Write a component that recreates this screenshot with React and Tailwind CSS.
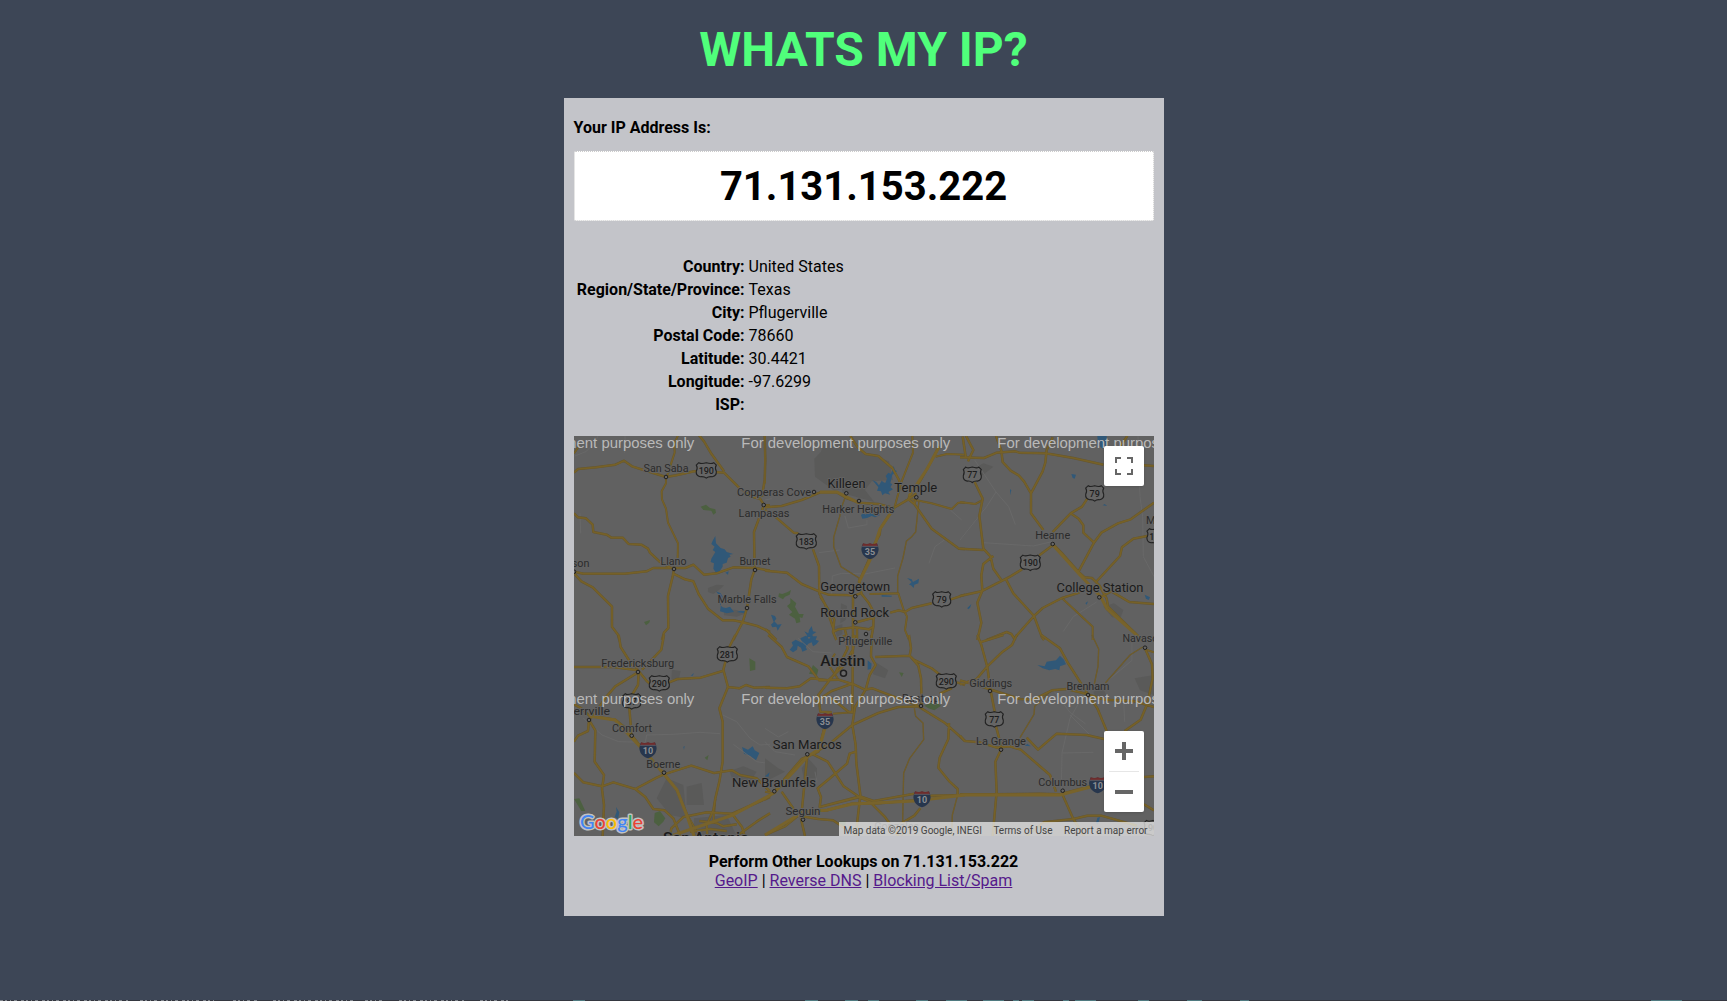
import React from "react";

const details = [
  ["Country:", "United States"],
  ["Region/State/Province:", "Texas"],
  ["City:", "Pflugerville"],
  ["Postal Code:", "78660"],
  ["Latitude:", "30.4421"],
  ["Longitude:", "-97.6299"],
  ["ISP:", ""],
];

// Six map tiles; coordinates inside each tile are in thirds of a pixel.
const tiles = [
  {
    at: "translate(-4 -6) scale(.33333)",
    water: [
      "M436 318L428 332L424 342L434 350L428 360L436 366L424 386L422 396L432 400L430 416L438 428L446 428L458 410L458 402L470 398L474 384L482 380L478 374L490 372L470 366L464 358L452 354L438 340Z",
      "M438 484L452 490L458 500L454 510L450 524L458 532L468 534L480 530L492 546L470 550L450 544L454 516L446 494Z",
      "M500 546L512 542L526 544L524 550ZM466 428L476 424L474 434Z",
    ],
    green: ["M392 230L408 224L420 234L436 238L438 248L430 254L424 242L400 240Z", "M222 576L240 570L238 578L228 586Z"],
    urban: ["M414 474L440 464L462 466L450 478L430 492L414 486ZM462 538L500 540L528 550L500 560L462 556Z"],
    major: ["M12 128L24 117L78 112L136 104L162 92L186 109L240 126L288 141L318 136L372 124L408 124L462 128L504 170L545 200L570 206L582 225L600 226",
      "M382 10L402 34L422 68L462 124", "M584 18L586 90L584 150L576 200",
      "M12 425L40 431L164 431L230 424L250 414L312 414L346 414L370 404L402 434L440 430L490 412L555 414L600 422",
      "M12 250L24 262L48 265L68 284L70 306L110 314L124 323L158 323L176 342L214 344L234 356L240 368L270 396L300 412",
      "M582 225L552 306L554 420L544 448L531 534L518 576L490 630",
      "M312 432L345 448L370 454L386 492L414 536L458 571L490 571L516 576L562 588L600 606",
      "M12 430L34 454L68 472L126 530L126 590L144 614L148 630",
      "M312 417L308 440L294 498L295 594L282 608L276 630"],
    medium: ["M326 12L313 40L314 68L303 102L300 120L288 141L288 160L275 184L276 208L288 236L294 278L324 340L323 384", "M12 70L26 50"],
    minor: ["M14 78L48 65L76 36L84 18M165 18L166 50L164 68M30 250L32 310"],
  },
  {
    at: "translate(191 -6) scale(.33333)",
    water: ["M322 150L334 156L342 166L350 152L358 158L366 156L382 162L376 172L384 178L370 186L376 194L360 190L352 196L348 184L336 182L340 172Z",
      "M362 156L366 146L362 138L370 128L378 132L386 108L390 120L396 124L382 134L376 160Z",
      "M288 256L294 248L302 254L310 246L322 252L340 248L344 256L330 262L320 258L306 264L292 266Z",
      "M426 444L440 448L444 456L462 446L460 460L448 464L446 474L438 466L432 464L440 456Z",
      "M18 554L30 558L34 566L28 574L38 584L50 582L38 602L34 590L22 592L18 584L26 576ZM118 604L130 610L132 600L140 588L144 604L154 606L142 614L146 628L132 620L118 630L126 616ZM350 495L380 497L380 500L350 500Z"],
    green: ["M76 504L94 520L90 530L102 552L116 552L112 564L104 562L106 576L94 580L90 566L72 554L82 546L74 538L66 528L76 520ZM42 490L52 492L68 486L78 480L74 494L60 500L54 508L40 500Z"],
    urban: ["M168 65L176 36L230 30L300 70L372 94L384 150L320 154L300 180L328 216L234 190L230 178L208 182L150 140L148 86Z",
      "M228 520L246 528L242 570L226 580Z", "M208 590L232 582L232 612L216 620Z"],
    major: ["M0 232L50 228L110 210L166 187L216 187L244 204L282 218L340 222L386 234L430 208L454 190",
      "M522 50L498 96L466 152L434 196L430 208L448 222L454 202",
      "M386 234L346 296L344 314L328 342L314 384L282 456L290 492L312 520L326 546L325 590L318 630",
      "M256 18L278 52L302 72L340 78L382 114L402 150L406 170",
      "M448 222L500 296L582 356L600 357", "M0 422L66 428L110 462L162 484L190 494L271 496L286 490",
      "M0 240L26 256L86 308L100 310", "M144 358L162 408L163 490L180 522L208 604L220 598L270 592L312 598L325 590",
      "M264 500L264 630", "M274 577L330 562", "M376 548L402 541L420 546L440 534L500 520", "M558 508L600 494",
      "M2 598L34 630", "M166 500L208 568L204 606L214 630", "M240 600L248 630M276 590L276 630"],
    medium: ["M442 18L444 68L410 154L388 234", "M0 18L0 160", "M512 80L546 72L600 74", "M440 208L500 220L560 237L580 218L600 218",
      "M314 492L400 490L416 540L426 560L420 600L432 630"],
    thin: ["M242 198L228 236L224 260L206 322L206 350L228 410L282 444L290 470", "M462 210L452 306L440 320L424 334L414 384L398 438L398 490"],
    minor: ["M240 258L250 294L306 284L306 270M162 368L224 360M200 492L202 438L230 430L300 432L390 414M0 210L20 206M492 400L510 350L538 330M556 240L590 270"],
  },
  {
    at: "translate(386 -6) scale(.33333)",
    water: ["M412 18L440 18L440 46L428 56L414 44Z", "M334 132L348 134L344 146L338 144ZM428 226L434 222L442 228ZM150 178L154 180L151 196Z",
      "M554 494L570 502L566 510L558 506ZM22 534L34 522L30 534L24 538ZM376 520L384 514L380 524Z"],
    urban: ["M430 530L462 520L490 540L482 562L456 562Z", "M18 130L70 100L100 110L62 140Z"],
    green: [],
    major: ["M0 82L72 84L110 68L166 64L178 68L258 70L340 84L430 104M552 106L582 108", "M18 18L40 60L24 94",
      "M108 18L124 62L128 96L152 122L176 136L192 154L213 190L213 250L250 300",
      "M278 22L260 60L256 98L248 124L213 190", "M278 306L332 250L366 230L382 206",
      "M332 250L356 266L370 286L370 308L402 338", "M582 218L512 268L474 280L424 308L402 338L356 424",
      "M562 318L520 326L486 352L480 378L408 456",
      "M278 342L308 372L354 424L374 442L396 444L418 466L440 506L444 530L530 614L546 630",
      "M278 346L238 376M186 418L150 440L64 484L0 498", "M100 378L70 402L64 436L67 482L52 518L64 578L52 630",
      "M44 156L68 206L58 258L70 356L92 380L100 416L124 450", "M0 356L70 360",
      "M138 448L160 490L222 558L246 622L252 630M358 488L306 504L248 534L222 558L190 594L160 628M424 500L454 484L508 516L582 522",
      "M80 630L140 606L154 612L166 630", "M8 20L18 86M502 18L480 50"],
    medium: ["M308 506L398 590L398 630", "M0 216L46 222L68 210"],
    minor: ["M44 90L108 186L146 230L166 284M108 186L80 230L0 330M70 338L220 348L280 334M534 18L540 200L548 260L550 380L582 440M410 516L340 560L310 604"],
  },
  {
    at: "translate(-4 199) scale(.33333)",
    water: ["M516 336L534 344L548 334L554 346L568 354L558 376L540 362L522 356Z", "M138 516L148 532L144 552L134 546L140 530ZM340 336L344 332L342 344ZM362 122L372 114L368 122Z"],
    green: ["M538 70L556 80L556 104L540 108ZM254 534L270 528L286 550L280 560L266 574L252 562ZM12 492L28 490L46 528L34 528ZM404 368L416 360L412 376Z"],
    urban: ["M350 455L395 444L402 510L350 510Z", "M290 430L340 450L350 550L300 540L260 490Z", "M478 408L520 394L560 410L540 440L486 430Z", "M372 550L470 540L500 603L370 603Z", "M306 104L332 108L326 136L304 132Z"],
    major: ["M146 0L152 36L186 90L204 100", "M282 0L274 44L236 84L216 104", "M12 96L130 96L204 106L230 138L240 146M298 142L322 132L392 128L458 108",
      "M496 0L478 36L460 104L474 156L448 220L458 260L458 380L448 440L436 490L430 526",
      "M474 156L508 160L528 150L552 158L600 156",
      "M204 112L136 154L108 186L74 236L57 255L54 288L24 302L12 320", "M206 112L204 150L186 180L178 220L185 302",
      "M12 208L34 220L58 242L136 254L170 282L226 352L282 418L320 464L350 536L374 603",
      "M57 255L76 286L74 380L102 420L96 462L102 510L98 603",
      "M12 414L40 442L96 454L130 442L196 462L260 428L282 418L326 404L364 392L432 414L486 406L510 420L560 430L600 470",
      "M196 462L226 486L250 522L284 526L310 550L326 590L330 603",
      "M300 603L304 580L340 546L410 532L486 536L600 486", "M486 536L516 576L524 603", "M388 558L440 564L460 574L500 568M360 590L420 582L470 588M430 526L410 570L412 603", "M500 603L560 560L600 535"],
    medium: ["M436 492L430 560M350 536L388 603"],
    minor: ["M40 250L96 300L146 320L226 322L230 300L310 298L390 292L450 296M458 240L500 260L540 310L570 330L600 328M490 328L560 380L600 386"],
  },
  {
    at: "translate(191 199) scale(.33333)",
    water: ["M74 44L84 32L80 22L92 14L112 24L106 10L122 2L132 12L140 4L156 4L152 14L162 18L154 28L144 34L140 22L130 26L122 36L126 44L112 50L108 38L98 32L96 44L84 52Z", "M308 76L320 86L318 102L308 104ZM0 424L14 412L10 426Z"],
    green: ["M144 90L160 104L156 120L132 116ZM402 112L416 114L410 126ZM478 212L510 198L528 212L508 226L490 220ZM222 560L242 560L242 572L222 572Z"],
    urban: ["M0 370L40 400L60 410L0 440Z", "M110 400L130 370L156 400L156 430L116 430ZM330 80L370 106L360 130L324 118Z"],
    major: ["M10 0L50 36L66 66L130 94L162 136L220 134L266 148L300 164L322 160L400 190L450 208L540 264L600 318",
      "M0 158L66 160L104 154L138 130L190 136L232 96L264 44L270 0", "M236 0L248 40L212 112L160 180L166 230L200 232",
      "M320 0L318 64L332 90L314 120L302 164L270 216L262 270L272 330L274 384L286 480L272 603",
      "M330 66L434 62L446 74L500 100L526 120M576 142L600 150", "M434 62L460 92L468 130L470 208L458 216",
      "M432 0L438 40L434 62", "M524 176L560 160",
      "M152 200L200 168L262 146M200 190L250 230L262 232L264 0", "M190 232L160 350L110 372L60 430L28 470L0 494",
      "M470 214L400 216L340 234L262 270L194 326L138 360", "M127 358L122 410L108 552L120 603",
      "M144 358L188 380L210 414L236 454L286 488L314 500L360 546L400 603",
      "M0 600L60 574L114 530L186 526L260 506L344 505L448 496L500 482L600 480",
      "M272 350L254 356L246 386L192 432L158 460L168 486L164 516L284 486", "M172 514L286 484L326 498L448 476",
      "M50 470L100 542L160 552L204 556L240 580", "M552 264L550 312L524 368L520 398L554 440L578 462L578 480",
      "M466 520L448 542L380 582"],
    medium: ["M204 236L262 232M0 470L20 474M210 56L190 88L220 134"],
    thin: ["M448 220L452 244L474 264L476 314L434 370L416 414L412 603", "M578 480L562 540L560 603"],
    minor: ["M0 280L40 306L70 290M150 410L156 440L100 460M100 10L144 50L200 54M0 320L30 350L90 360"],
  },
  {
    at: "translate(386 199) scale(.33333)",
    water: ["M232 90L254 94L260 80L288 76L300 62L312 74L318 88L300 94L298 106L286 102L268 106L248 100Z", "M192 332L202 326L212 334ZM412 548L420 546L414 568L408 564Z"],
    green: [],
    urban: ["M400 170L430 160L440 184L408 190Z", "M524 130L582 120L582 180L540 166Z"],
    major: ["M52 0L64 30L82 96L90 156L98 198L104 230M108 274L120 320L123 344", "M0 148L50 132L82 94L128 50L156 30L170 0M60 22L130 0",
      "M0 136L50 150L180 192L220 194L276 166L320 162L384 178L432 194L520 198L582 216",
      "M244 0L300 40L324 84L384 178L412 220L440 288", "M555 40L576 88L578 130L562 206L542 254L494 288",
      "M0 302L14 318L60 322L110 338L150 334L182 344L270 420L288 470",
      "M123 344L106 380L110 470L98 603", "M200 308L234 344L290 296L380 300L432 312",
      "M0 478L100 478L240 476L300 478L392 454L440 450M552 426L582 424",
      "M308 480L340 552L372 603M250 562L340 552L382 542L424 542L530 572M552 508L582 526"],
    medium: ["M552 42L582 52M200 603L250 562"],
    thin: ["M396 0L416 42L414 94L402 152M548 36L510 60L436 144", "M180 308L222 238L224 214L270 170"],
    minor: ["M280 166L330 232L376 266M376 170L330 250L306 354L304 470M330 240L390 300M306 354L400 352M440 140L516 76L516 20M490 180L494 260"],
  },
];

// name, centre x, baseline y, width, font size
const places = [
  ["San Saba", 92, 36, 45, 11], ["Copperas Cove", 200, 59.5, 74, 11], ["Lampasas", 190, 80.5, 51, 11],
  ["Killeen", 272.5, 51.7, 38, 13], ["Temple", 341.8, 55.7, 43, 13], ["Harker Heights", 284.3, 76.7, 72, 11],
  ["Llano", 99.5, 129, 26, 11], ["Burnet", 181, 128.7, 31, 11], ["Mason", -1, 131, 33, 11],
  ["Marble Falls", 173, 166.7, 59, 11], ["Georgetown", 281.3, 154.7, 70, 13], ["Round Rock", 280.7, 181.3, 69, 13],
  ["Pflugerville", 291.3, 208.7, 54, 11], ["Hearne", 478.7, 103.3, 35, 11], ["College Station", 526, 155.7, 87, 13],
  ["Navasota", 571, 206, 45, 11], ["Madisonville", 603, 88.3, 62, 11], ["Fredericksburg", 63.7, 230.7, 73, 11],
  ["Kerrville", 14, 278.7, 44, 11], ["Comfort", 58, 295.7, 40, 11], ["Boerne", 89.3, 331.7, 34, 11],
  ["New Braunfels", 200, 350.7, 84, 13], ["San Marcos", 233.3, 312.7, 69, 13], ["Seguin", 229, 378.7, 35, 11.5],
  ["Bastrop", 347, 265.7, 38, 11], ["Giddings", 416.7, 250.7, 43, 11], ["Brenham", 514, 253.7, 43, 11],
  ["La Grange", 427, 308.7, 50, 11], ["Columbus", 488.7, 350.3, 49, 11], ["Gonzales", 322.7, 393.7, 45, 11],
  ["Austin", 268.7, 230.3, 45, 15.5], ["San Antonio", 132, 407, 86, 15.5],
];

const towns = [
  [92, 41], [189.7, 69], [240, 56], [272.3, 57.3], [285, 65], [342.3, 61.3], [100, 133], [181, 134], [173, 172],
  [281.3, 160.3], [281.3, 186.3], [292, 198], [478.7, 108], [525.3, 161.3], [571, 211.7], [64, 236], [15, 284],
  [57.7, 299.7], [90, 336.7], [233.3, 318.3], [200.3, 355.3], [229, 383.7], [347, 270], [416, 255], [514, 259],
  [427, 313.7], [488.7, 354.7], [0, 135.7],
];

const highways = [
  ["190", 132.3, 34.3], ["183", 232.3, 105.3], ["79", 367.7, 163.3], ["77", 398.3, 38.7], ["79", 520.7, 57.3],
  ["190", 456.3, 126.7], ["190", 583, 100.3], ["290", 85.3, 247.3], ["87", 57.7, 265.3], ["281", 153.3, 218.3],
  ["290", 372.3, 245.3], ["77", 420.3, 283.3], ["90", 579, 392],
];

const interstates = [["35", 296, 115], ["10", 74, 314], ["35", 251, 285], ["10", 348, 363], ["10", 523.7, 349]];

const glints = [
  [573, 12], [805, 13], [845, 13], [868, 11], [916, 12], [946, 21], [983, 21], [1013, 6], [1022, 12], [1063, 6],
  [1075, 21], [1138, 11], [1187, 15], [1240, 9], [1651, 31],
];

function Roads({ paths = [], width, edge }) {
  return (
    <g fill="none" strokeLinejoin="round">
      <path d={paths.join("")} stroke="#65562f" strokeWidth={edge} />
      <path d={paths.join("")} stroke="#766128" strokeWidth={width} />
    </g>
  );
}

function Highway({ label, x, y }) {
  const w = label.length === 3 ? 10 : 9;
  return (
    <g transform={`translate(${x} ${y})`}>
      <path
        d={`M${-w + 2.5} -7.6Q${-w / 2} -6 0 -7.6Q${w / 2} -6 ${w - 2.5} -7.6L${w} -5.2Q${w - 1.8} -2.5 ${w} 1Q${w + 0.5} 5.5 ${w - 4} 6.4Q2 6 0 7.8Q-2 6 ${-w + 4} 6.4Q${-w - 0.5} 5.5 ${-w} 1Q${-w + 1.8} -2.5 ${-w} -5.2Z`}
        fill="#656565" stroke="#222222" strokeWidth="1.1"
      />
      <text y="3.3" textAnchor="middle" fontSize="9" fontWeight="500" fill="#1d1d1d">{label}</text>
    </g>
  );
}

function Interstate({ label, x, y }) {
  return (
    <g transform={`translate(${x} ${y})`}>
      <path d="M-7 -7.5Q-3 -6 0 -7.5Q3 -6 7 -7.5Q10 -2 7.4 3Q5 7 0 8.2Q-5 7 -7.4 3Q-10 -2 -7 -7.5Z" fill="#27364d" />
      <path d="M-7 -7.7Q-3 -6.2 0 -7.7Q3 -6.2 7 -7.7L7.8 -4.8H-7.8Z" fill="#6d2c2c" />
      <path d="M-7.9 -4.7H7.9" stroke="#70757c" strokeWidth=".6" />
      <text y="4.2" textAnchor="middle" fontSize="9" fontWeight="700" fill="#8b8e93">{label}</text>
    </g>
  );
}

function MapDrawing() {
  return (
    <svg className="block h-[400px] w-[580px] font-[Roboto,sans-serif]" viewBox="0 0 580 400">
      <rect width="580" height="400" fill="#616161" />
      {tiles.map((t) => (
        <g key={t.at} transform={t.at}>
          <path d={t.urban.join("")} fill="#5a5a59" />
          <path d={t.green.join("")} fill="#4c6040" />
          <path d={t.water.join("")} fill="#305878" />
          <path d={t.minor.join("")} fill="none" stroke="#6a6a6a" strokeWidth="2.5" />
        </g>
      ))}
      {tiles.map((t) => (
        <g key={t.at} transform={t.at}>
          <Roads paths={t.thin} width={2} edge={4} />
          <Roads paths={t.medium} width={4} edge={6} />
          <Roads paths={t.major} width={5} edge={7.5} />
        </g>
      ))}
      <g fill="none" stroke="#78632b" strokeWidth="3" strokeLinejoin="round">
        <path d="M365 11L353 33L335 60M320 72L306 93L296 124L285 146" />
        <path d="M246 56L263 56L285 67" />
        <path d="M15 280L41 284L71 316L90 338L103 354L113 380L120 400" />
        <path d="M191 399L229 376L253 374L278 368L340 365L391 359H486L520 350" />
        <path d="M478 108L506 139L527 161L533 173L568 204" />
        <path d="M251 292L245 313L233 321L200 357L159 379L97 400" />
      </g>
      <g fill="#676767" stroke="#1f1f1f" strokeWidth="1">
        {towns.map(([x, y]) => <circle key={`${x}-${y}`} cx={x} cy={y} r="1.8" />)}
        <circle cx="269.5" cy="237.3" r="3" strokeWidth="1.5" />
      </g>
      {highways.map(([label, x, y]) => <Highway key={`${x}-${y}`} label={label} x={x} y={y} />)}
      {interstates.map(([label, x, y]) => <Interstate key={`${x}-${y}`} label={label} x={x} y={y} />)}
      <g textAnchor="middle" stroke="#636363" strokeWidth="1.8" strokeLinejoin="round" paintOrder="stroke">
        {places.map(([name, x, y, w, size]) => (
          <text key={name} x={x} y={y} textLength={w} lengthAdjust="spacingAndGlyphs" fontSize={size} fontWeight={size > 15 ? 500 : 400} fill={size > 12 ? "#1b1b1b" : "#2b2b2b"}>
            {name}
          </text>
        ))}
      </g>
      <g fill="#b9b9b9" className="font-['Liberation_Sans',sans-serif]" fontSize="15.5">
        {[12.3, 268.3].map((y) =>
          [-88.7, 167.3, 423.3].map((x) => (
            <text key={`${x}-${y}`} x={x} y={y} textLength="209" lengthAdjust="spacingAndGlyphs">For development purposes only</text>
          ))
        )}
      </g>
      <text x="6" y="392.5" fontSize="20" fontWeight="500" textLength="63" stroke="#c2c2c2" strokeWidth="3" strokeLinejoin="round" paintOrder="stroke" className="font-[Lato,sans-serif]">
        <tspan fill="#4285f4">G</tspan>
        <tspan fill="#ea4335">o</tspan>
        <tspan fill="#fbbc05">o</tspan>
        <tspan fill="#4285f4">g</tspan>
        <tspan fill="#34a853">l</tspan>
        <tspan fill="#ea4335">e</tspan>
      </text>
    </svg>
  );
}

function LocationMap() {
  return (
    <div className="relative h-[400px] w-[580px] overflow-hidden">
      <MapDrawing />
      <button aria-label="Fullscreen" className="absolute top-[10px] right-[10px] flex size-10 items-center justify-center rounded-xs bg-white shadow">
        <svg className="size-[18px]" viewBox="0 0 18 18" fill="none" stroke="#666666" strokeWidth="2">
          <path d="M1 6V1H6M12 1H17V6M17 12V17H12M6 17H1V12" />
        </svg>
      </button>
      <div className="absolute right-[10px] bottom-6 flex h-[81px] w-10 flex-col items-center rounded-xs bg-white shadow">
        <button aria-label="Zoom in" className="flex h-10 items-center justify-center">
          <svg className="size-[18px]" viewBox="0 0 18 18" stroke="#666666" strokeWidth="4"><path d="M0 9H18M9 0V18" /></svg>
        </button>
        <div className="h-px w-[30px] bg-[#e6e6e6]" />
        <button aria-label="Zoom out" className="flex h-10 items-center justify-center">
          <svg className="size-[18px]" viewBox="0 0 18 18" stroke="#666666" strokeWidth="4"><path d="M0 9H18" /></svg>
        </button>
      </div>
      <div className="absolute right-0 bottom-0 flex h-[14px] w-[315px] justify-between bg-[#f5f5f5]/70 pr-[6px] pl-[5px] text-[10px] leading-[17px] whitespace-nowrap text-[#444444]">
        <span>Map data ©2019 Google, INEGI</span>
        <span>Terms of Use</span>
        <span>Report a map error</span>
      </div>
    </div>
  );
}

export default function App() {
  return (
    <div className="flex h-[1001px] w-full flex-col items-center overflow-hidden bg-[#3d4656] font-[Roboto,sans-serif] text-base leading-[19px] text-black">
      <h1 className="mt-[22px] text-[48px] leading-[56px] font-bold text-[#50ff7b]">WHATS MY IP?</h1>
      <main className="mt-5 flex h-[818px] w-[600px] flex-col bg-[#c3c4c9] px-[10px] pt-5">
        <p className="font-bold">Your IP Address Is:</p>
        <div className="mt-[14px] flex h-[70px] items-center justify-center rounded-xs border border-dotted border-[#cccccc] bg-white text-[40px] leading-[47px] font-bold">
          71.131.153.222
        </div>
        <dl className="mt-[34px] grid grid-cols-[171px_1fr] gap-x-1 leading-[23px]">
          {details.map(([label, value]) => (
            <React.Fragment key={label}>
              <dt className="text-right font-bold whitespace-nowrap">{label}</dt>
              <dd className="h-[23px]">{value}</dd>
            </React.Fragment>
          ))}
        </dl>
        <div className="mt-5">
          <LocationMap />
        </div>
        <div className="mt-4 text-center">
          <p className="font-bold">Perform Other Lookups on 71.131.153.222</p>
          <p>
            <a className="text-[#551a8b] underline" href="#geoip">GeoIP</a> |{" "}
            <a className="text-[#551a8b] underline" href="#dns">Reverse DNS</a> |{" "}
            <a className="text-[#551a8b] underline" href="#spam">Blocking List/Spam</a>
          </p>
        </div>
      </main>
      <svg className="mt-auto block h-px w-full" viewBox="0 0 1727 1" preserveAspectRatio="none">
        <rect width="1727" height="1" fill="#343740" />
        <path d="M0 .5H128M140 .5H214M233 .5H257M273 .5H356M365 .5H386M399 .5H464M480 .5H511" stroke="#82878e" strokeDasharray="3 2 2 3 1 3 3 4" />
        {glints.map(([x, w]) => <rect key={x} x={x} width={w} height="1" fill="#4f7a80" />)}
      </svg>
    </div>
  );
}
